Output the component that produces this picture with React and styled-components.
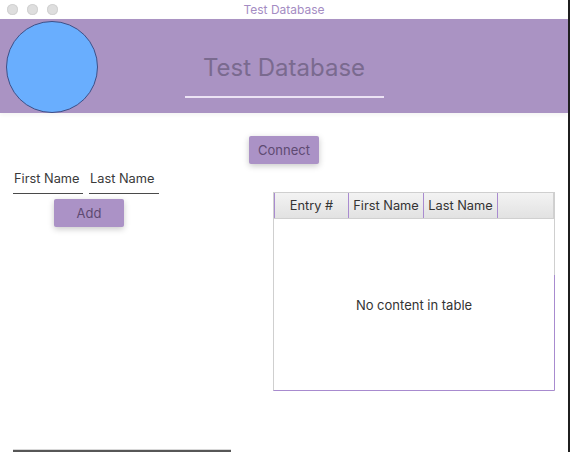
import React from 'react';
import styled, { createGlobalStyle } from 'styled-components';

const GlobalStyle = createGlobalStyle`
  html, body {
    margin: 0;
    padding: 0;
    background: #ffffff;
  }
  body {
    font-family: Inter, "Liberation Sans", sans-serif;
  }
`;

const Window = styled.div`
  width: 570px;
  height: 452px;
  box-sizing: border-box;
  border-right: 2px solid #1f1f1f;
  display: flex;
  flex-direction: column;
  background: #ffffff;
  overflow: hidden;
`;

const TitleBar = styled.div`
  height: 19px;
  flex: none;
  display: grid;
  grid-template-columns: 1fr auto 1fr;
  align-items: center;
  background: #ffffff;
`;

const Lights = styled.div`
  display: flex;
  gap: 9px;
  padding-left: 7px;
`;

const Light = styled.span`
  width: 11px;
  height: 11px;
  border-radius: 50%;
  background: #dedede;
  box-shadow: inset 0 0 0 1px #d2d2d2;
`;

const WindowTitle = styled.div`
  font-size: 12px;
  color: #a48cc3;
  line-height: 19px;
`;

const Header = styled.header`
  height: 94px;
  flex: none;
  background: #aa93c3;
  display: grid;
  grid-template-columns: 1fr auto 1fr;
  box-shadow: 0 2px 4px rgba(0, 0, 0, 0.05);
`;

const Logo = styled.div`
  width: 90px;
  height: 90px;
  margin: 2px 0 0 6px;
  border-radius: 50%;
  background: #69aefe;
  border: 1px solid #3f4f86;
`;

const TitleBlock = styled.div`
  display: flex;
  flex-direction: column;
  align-items: center;
  padding-top: 35px;
`;

const Title = styled.h1`
  margin: 0;
  font-size: 24px;
  font-weight: 400;
  line-height: 28px;
  color: #7a6a8f;
`;

const Underline = styled.div`
  width: 199px;
  height: 2px;
  margin-top: 14px;
  background: #ece3f4;
`;

const Content = styled.div`
  flex: 1;
  display: flex;
  flex-direction: column;
`;

const ConnectRow = styled.div`
  display: flex;
  justify-content: center;
  padding-top: 23px;
`;

const Button = styled.button`
  width: 70px;
  height: 28px;
  border: none;
  border-radius: 2px;
  background: #ab92c6;
  color: #5e4a72;
  font-family: Inter, "Liberation Sans", sans-serif;
  font-size: 13px;
  padding: 0;
  box-shadow: 0 2px 6px rgba(0, 0, 0, 0.22);
`;

const Main = styled.div`
  flex: 1;
  display: flex;
`;

const FormColumn = styled.div`
  width: 273px;
  box-sizing: border-box;
  padding: 6px 0 0 13px;
  display: flex;
  flex-direction: column;
`;

const Fields = styled.div`
  display: flex;
  gap: 6px;
`;

const Field = styled.div`
  width: 70px;
  height: 24px;
  box-sizing: border-box;
  border-bottom: 1px solid #4a4a4a;
  font-size: 12.8px;
  color: #3a3a3a;
  line-height: 18px;
  padding-left: 1px;
  white-space: nowrap;
`;

const AddRow = styled.div`
  width: 146px;
  display: flex;
  justify-content: center;
  padding: 5px 0 0 6px;
  box-sizing: border-box;
`;

const Table = styled.div`
  width: 282px;
  height: 199px;
  margin-top: 28px;
  box-sizing: border-box;
  border: 1px solid #cfcfcf;
  border-bottom-color: #a88bcf;
  display: flex;
  flex-direction: column;
`;

const HeaderRow = styled.div`
  height: 26px;
  flex: none;
  display: flex;
  background: linear-gradient(#f3f3f3, #e2e2e2);
  border-bottom: 1px solid #d0d0d0;
  box-sizing: border-box;
`;

const HeadCell = styled.div`
  width: ${(p) => p.w}px;
  flex: ${(p) => (p.w ? 'none' : '1')};
  box-sizing: border-box;
  border-right: 1px solid ${(p) => (p.accent ? '#a98bd0' : '#d0d0d0')};
  border-left: ${(p) => (p.left ? '1px solid #a98bd0' : 'none')};
  font-size: 12.8px;
  color: #333333;
  text-align: center;
  line-height: 25px;
  white-space: nowrap;
`;

const Body = styled.div`
  flex: 1;
  display: grid;
  grid-template-rows: 56px 1fr;
  grid-template-columns: 1fr;
  margin-right: -1px;
`;

const Empty = styled.div`
  grid-row: 1 / 3;
  grid-column: 1;
  display: flex;
  align-items: center;
  justify-content: center;
  font-size: 13px;
  color: #333333;
  padding-right: 1px;
`;

const RightEdge = styled.div`
  grid-row: 2;
  grid-column: 1;
  justify-self: end;
  width: 1px;
  background: #a88bcf;
`;

const Footer = styled.div`
  padding-left: 13px;
  display: flex;
`;

const FooterBar = styled.div`
  width: 218px;
  height: 2px;
  background: #575757;
  border-top: 1px solid #d8d8d8;
`;

const columns = [
  { name: 'Entry #', w: 75, accent: true, left: true },
  { name: 'First Name', w: 75, accent: true },
  { name: 'Last Name', w: 74, accent: true },
  { name: '', w: 0 }
];

export default function App() {
  return (
    <>
      <GlobalStyle />
      <Window>
        <TitleBar>
          <Lights>
            <Light />
            <Light />
            <Light />
          </Lights>
          <WindowTitle>Test Database</WindowTitle>
          <div />
        </TitleBar>
        <Header>
          <div>
            <Logo />
          </div>
          <TitleBlock>
            <Title>Test Database</Title>
            <Underline />
          </TitleBlock>
          <div />
        </Header>
        <Content>
          <ConnectRow>
            <Button>Connect</Button>
          </ConnectRow>
          <Main>
            <FormColumn>
              <Fields>
                <Field>First Name</Field>
                <Field>Last Name</Field>
              </Fields>
              <AddRow>
                <Button>Add</Button>
              </AddRow>
            </FormColumn>
            <Table>
              <HeaderRow>
                {columns.map((c, i) => (
                  <HeadCell key={i} w={c.w || undefined} accent={c.accent} left={c.left}>
                    {c.name}
                  </HeadCell>
                ))}
              </HeaderRow>
              <Body>
                <Empty>No content in table</Empty>
                <RightEdge />
              </Body>
            </Table>
          </Main>
          <Footer>
            <FooterBar />
          </Footer>
        </Content>
      </Window>
    </>
  );
}
